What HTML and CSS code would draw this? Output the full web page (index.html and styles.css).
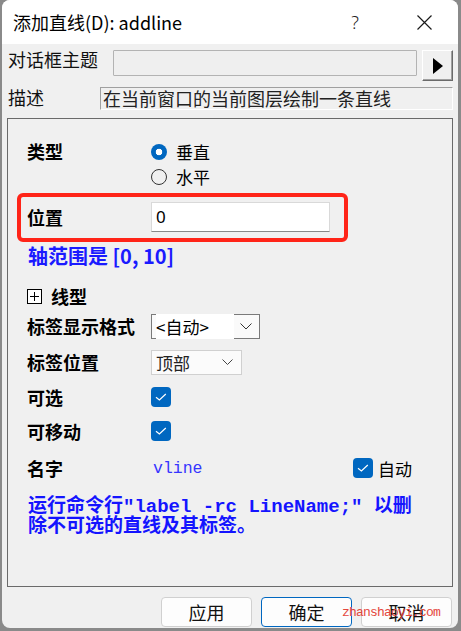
FILE: index.html
```html
<!DOCTYPE html>
<html lang="zh-CN">
<head>
    <meta charset="UTF-8">
    <meta name="viewport" content="width=device-width, initial-scale=1.0">
    <title>添加直线(D): addline</title>
    <link rel="stylesheet" href="styles.css">
</head>
<body>

<div class="window">
    <div class="titlebar">
        <span class="title">添加直线(D): addline</span>
        <span class="help">?</span>
        <span class="close">
            <svg width="15" height="15" viewBox="0 0 15 15"><path d="M0.5 0.5L14.5 14.5M14.5 0.5L0.5 14.5" stroke="#1a1a1a" stroke-width="1.2" fill="none"/></svg>
        </span>
    </div>

    <div class="content">
        <div class="theme-row">
            <span class="top-label theme-label">对话框主题</span>
            <div class="theme-box"></div>
            <button class="arrow-btn">
                <svg width="10" height="16" viewBox="0 0 10 16"><polygon points="0,0 10,8 0,16" fill="#000"/></svg>
            </button>
        </div>
        <div class="desc-row">
            <span class="top-label desc-label">描述</span>
            <div class="desc-box">在当前窗口的当前图层绘制一条直线</div>
        </div>

        <div class="group">
            <div class="row row-type">
                <span class="label">类型</span>
                <div class="radios">
                    <div class="radio"><span class="radio-dot checked"></span>垂直</div>
                    <div class="radio"><span class="radio-dot"></span>水平</div>
                </div>
            </div>
            <div class="row row-pos">
                <span class="label">位置</span>
                <div class="text-input">0</div>
            </div>
            <div class="row row-axis">轴范围是 [0, 10]</div>
            <div class="row row-linetype">
                <svg width="15" height="15" viewBox="0 0 15 15"><rect x="0.5" y="0.5" width="14" height="14" fill="#fff" stroke="#000"/><path d="M3 7.5H12M7.5 3V12" stroke="#000"/></svg>
                <span class="linetype-label">线型</span>
            </div>
            <div class="row row-format">
                <span class="label">标签显示格式</span>
                <div class="select select-format">
                    <span class="select-text">&lt;自动&gt;</span>
                    <svg width="12" height="7" viewBox="0 0 12 7"><path d="M0.5 0.5L6 6L11.5 0.5" stroke="#333" fill="none"/></svg>
                </div>
            </div>
            <div class="row row-place">
                <span class="label">标签位置</span>
                <div class="select select-place">
                    <span class="select-text">顶部</span>
                    <svg width="11" height="6" viewBox="0 0 11 6"><path d="M0.5 0.5L5.5 5.5L10.5 0.5" stroke="#444" fill="none"/></svg>
                </div>
            </div>
            <div class="row row-check">
                <span class="label">可选</span>
                <span class="check"><svg width="20" height="20" viewBox="0 0 20 20"><path d="M5 10.2L8.4 13L14.8 7" stroke="#fff" stroke-width="1.2" fill="none"/></svg></span>
            </div>
            <div class="row row-check">
                <span class="label">可移动</span>
                <span class="check"><svg width="20" height="20" viewBox="0 0 20 20"><path d="M5 10.2L8.4 13L14.8 7" stroke="#fff" stroke-width="1.2" fill="none"/></svg></span>
            </div>
            <div class="row row-name">
                <span class="label">名字</span>
                <span class="name-value">vline</span>
                <span class="check"><svg width="20" height="20" viewBox="0 0 20 20"><path d="M5 10.2L8.4 13L14.8 7" stroke="#fff" stroke-width="1.2" fill="none"/></svg></span>
                <span class="auto-label">自动</span>
            </div>
            <div class="note">运行命令行"label -rc LineName;" 以删<br>除不可选的直线及其标签。</div>

            <div class="highlight"></div>
        </div>

        <div class="buttons">
            <button class="btn">应用</button>
            <button class="btn btn-primary">确定</button>
            <button class="btn">取消</button>
        </div>
    </div>

    <div class="watermark">zhanshaoyi.com</div>
</div>

</body>
</html>
```

FILE: styles.css
```css
* {
    margin: 0;
    padding: 0;
    box-sizing: border-box;
}

body {
    background: #8a8a8a;
    font-family: "Noto Sans CJK SC", sans-serif;
    color: #000;
}

.window {
    position: relative;
    margin-left: 2px;
    width: 456px;
    height: 628px;
    background: #f0f0f0;
    border-radius: 8px;
    overflow: hidden;
}

/* title bar */
.titlebar {
    display: flex;
    align-items: center;
    height: 44px;
    background: #fff;
}

.title {
    flex: 1;
    margin-left: 11px;
    font-size: 18px;
}

.help {
    width: 20px;
    text-align: center;
    font-family: "Noto Sans", sans-serif;
    font-size: 18px;
    font-weight: 300;
    color: #222;
}

.close {
    display: flex;
    margin-left: 52px;
    margin-right: 26px;
}

/* dialog content */
.content {
    padding: 6px 5px 0 5px;
}

.theme-row {
    display: flex;
    align-items: flex-start;
    height: 31px;
}

.top-label {
    font-size: 18px;
    line-height: 18px;
    padding-left: 1px;
    color: #111;
}

.theme-label {
    width: 106px;
}

.theme-box {
    width: 304px;
    height: 26px;
    background: #efefef;
    border: 1px solid #b3b3b3;
    border-radius: 1px;
}

.arrow-btn {
    display: flex;
    align-items: center;
    justify-content: center;
    width: 31px;
    height: 31px;
    margin-left: 5px;
    background: #f0f0f0;
    border: 1px solid;
    border-color: #fff #6a6a6a #6a6a6a #fff;
    box-shadow: inset -1px -1px 0 #a0a0a0;
}

.desc-row {
    display: flex;
    align-items: flex-start;
    margin-top: 6px;
}

.desc-label {
    width: 93px;
    margin-top: 1px;
}

.desc-box {
    width: 353px;
    height: 23px;
    padding-left: 2px;
    font-size: 18px;
    line-height: 20px;
    color: #222;
    background: #f0f0f0;
    border: 1px solid;
    border-color: #a0a0a0 #fff #fff #a0a0a0;
}

/* group box */
.group {
    position: relative;
    margin-top: 8px;
    height: 469px;
    padding: 20px 0 0 19px;
    border: 1px solid #6a6a6a;
}

.row {
    display: flex;
    align-items: center;
}

.label {
    width: 124px;
    flex-shrink: 0;
    font-size: 18px;
    font-weight: bold;
}

.row-type {
    align-items: flex-start;
    height: 52px;
}

.row-type .label {
    line-height: 25px;
}

.radio {
    display: flex;
    align-items: center;
    height: 25px;
    font-size: 17px;
}

.radio-dot {
    width: 16px;
    height: 16px;
    margin-right: 9px;
    border-radius: 50%;
    border: 1px solid #333;
}

.radio-dot.checked {
    border: none;
    background: radial-gradient(circle, #fff 0 3px, #0067c0 3.6px);
}

.row-pos {
    height: 51px;
}

.text-input {
    width: 179px;
    height: 30px;
    padding-left: 4px;
    font-family: "Noto Sans", sans-serif;
    font-size: 17px;
    line-height: 28px;
    background: #fff;
    border: 1px solid #d9d9d9;
    border-bottom-color: #888;
}

.row-axis {
    height: 26px;
    padding-left: 1px;
    font-size: 20px;
    font-weight: bold;
    color: #1a1aff;
}

.row-linetype {
    height: 24px;
    margin-top: 16px;
    gap: 9px;
}

.linetype-label {
    font-size: 18px;
    font-weight: bold;
}

.row-format,
.row-place {
    height: 36px;
}

.select {
    display: flex;
    align-items: center;
    justify-content: space-between;
    height: 25px;
    padding-left: 4px;
    font-size: 17px;
}

.select-format {
    width: 109px;
    padding-right: 7px;
    background: #fafafa;
    border: 1px solid #7a7a7a;
}

.select-format .select-text {
    width: 78px;
    background: #fff;
}

.select-place {
    width: 91px;
    padding-right: 8px;
    color: #222;
    background: #fbfbfb;
    border: 1px solid #d0d0d0;
}

.row-check {
    height: 34px;
}

.check {
    display: flex;
    width: 20px;
    height: 20px;
    border-radius: 4px;
    background: #0067c0;
}

.row-name {
    height: 40px;
}

.name-value {
    width: 202px;
    padding-left: 2px;
    font-family: "Liberation Mono", monospace;
    font-size: 16.5px;
    color: #3535ff;
}

.auto-label {
    margin-left: 5px;
    font-size: 17px;
}

.note {
    margin-top: 9px;
    padding-left: 1px;
    font-family: "Liberation Mono", "Noto Sans CJK SC", monospace;
    font-size: 19px;
    line-height: 20px;
    font-weight: bold;
    color: #1414ff;
}

.highlight {
    position: absolute;
    left: 9px;
    top: 74px;
    width: 331px;
    height: 49px;
    border: 4px solid #ff2418;
    border-radius: 6px;
}

/* bottom buttons */
.buttons {
    display: flex;
    justify-content: flex-end;
    gap: 9px;
    margin-top: 10px;
    padding-right: 1px;
}

.btn {
    width: 91px;
    height: 30px;
    font-family: "Noto Sans CJK SC", sans-serif;
    font-size: 18px;
    color: #111;
    background: #fdfdfd;
    border: 1px solid #d0d0d0;
    border-radius: 4px;
}

.btn-primary {
    border-color: #0067c0;
}

.watermark {
    position: absolute;
    left: 340px;
    top: 605px;
    font-family: "Liberation Mono", monospace;
    font-size: 13px;
    letter-spacing: -0.8px;
    color: #e4473c;
}
```
